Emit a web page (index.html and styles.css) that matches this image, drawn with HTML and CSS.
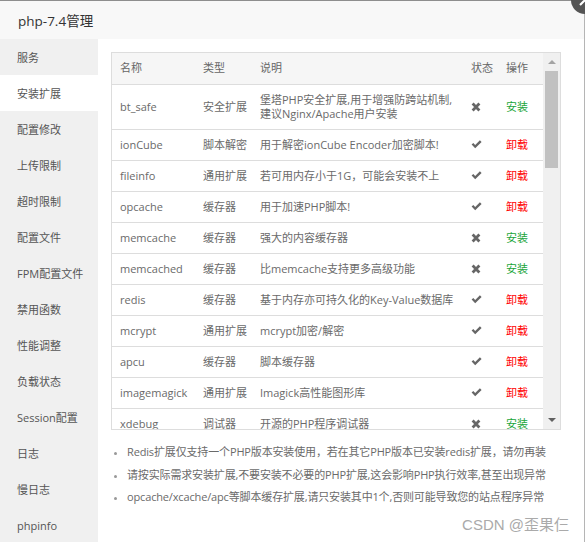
FILE: index.html
```html
<!DOCTYPE html>
<html>
    <head>
        <meta charset="UTF-8">
        <meta name="viewport" content="width=device-width, initial-scale=1.0">
        <link rel="stylesheet" href="styles.css">
        <title>php-7.4管理</title>
    </head>
    <body>

        <div class="layer">
            <div class="layer-title">php-7.4管理</div>

            <div class="layer-body">
                <ul class="side-menu">
                    <li>服务</li>
                    <li class="on">安装扩展</li>
                    <li>配置修改</li>
                    <li>上传限制</li>
                    <li>超时限制</li>
                    <li>配置文件</li>
                    <li>FPM配置文件</li>
                    <li>禁用函数</li>
                    <li>性能调整</li>
                    <li>负载状态</li>
                    <li>Session配置</li>
                    <li>日志</li>
                    <li>慢日志</li>
                    <li>phpinfo</li>
                </ul>

                <div class="main">
                    <div class="table-box">
                        <div class="table-scroll">
                            <table class="ext-table">
                                <colgroup>
                                    <col style="width:82px">
                                    <col style="width:57px">
                                    <col style="width:211px">
                                    <col style="width:35px">
                                    <col style="width:46px">
                                </colgroup>
                                <thead>
                                    <tr><th>名称</th><th>类型</th><th>说明</th><th>状态</th><th>操作</th></tr>
                                </thead>
                                <tbody id="extList"></tbody>
                            </table>
                        </div>
                        <div class="scrollbar">
                            <span class="arrow up"></span>
                            <div class="track"><div class="thumb"></div></div>
                            <span class="arrow down"></span>
                        </div>
                    </div>

                    <ul class="help">
                        <li>Redis扩展仅支持一个PHP版本安装使用，若在其它PHP版本已安装redis扩展，请勿再装</li>
                        <li>请按实际需求安装扩展,不要安装不必要的PHP扩展,这会影响PHP执行效率,甚至出现异常</li>
                        <li>opcache/xcache/apc等脚本缓存扩展,请只安装其中1个,否则可能导致您的站点程序异常</li>
                    </ul>
                </div>
            </div>

            <div class="watermark">CSDN @歪果仨</div>
        </div>

        <div class="layer-close">
            <svg width="30" height="30" viewBox="0 0 30 30">
                <circle cx="15" cy="15" r="14" fill="#555"/>
                <path d="M10 10 L20 20 M20 10 L10 20" stroke="#fff" stroke-width="2.2"/>
            </svg>
        </div>

        <script>
            // name, type, desc, installed
            const exts = [
                ["bt_safe", "安全扩展", "堡塔PHP安全扩展,用于增强防跨站机制,<br>建议Nginx/Apache用户安装", false],
                ["ionCube", "脚本解密", "用于解密ionCube Encoder加密脚本!", true],
                ["fileinfo", "通用扩展", "若可用内存小于1G，可能会安装不上", true],
                ["opcache", "缓存器", "用于加速PHP脚本!", true],
                ["memcache", "缓存器", "强大的内容缓存器", false],
                ["memcached", "缓存器", "比memcache支持更多高级功能", false],
                ["redis", "缓存器", "基于内存亦可持久化的Key-Value数据库", true],
                ["mcrypt", "通用扩展", "mcrypt加密/解密", true],
                ["apcu", "缓存器", "脚本缓存器", true],
                ["imagemagick", "通用扩展", "Imagick高性能图形库", true],
                ["xdebug", "调试器", "开源的PHP程序调试器", false]
            ];

            const okIcon = '<svg width="11" height="9" viewBox="0 0 11 9"><path d="M0.6 4.6 L2.3 3 L4.2 4.9 L8.9 0.3 L10.6 2 L4.2 8.3 Z" fill="#666"/></svg>';
            const noIcon = '<svg width="10" height="10" viewBox="0 0 10 10"><path d="M1.6 1.6 L8.4 8.4 M8.4 1.6 L1.6 8.4" stroke="#666" stroke-width="2.8"/></svg>';

            let html = "";
            exts.forEach((e) => {
                let op = e[3] ? '<a class="btn-del">卸载</a>' : '<a class="btn-add">安装</a>';
                let cls = e[2].indexOf("<br>") > -1 ? ' class="tall"' : '';
                html += "<tr" + cls + "><td>" + e[0] + "</td><td>" + e[1] + "</td><td>" + e[2] + "</td><td>" + (e[3] ? okIcon : noIcon) + "</td><td>" + op + "</td></tr>";
            });
            document.getElementById("extList").innerHTML = html;
        </script>
    </body>
</html>
```

FILE: styles.css
```css
* {
    box-sizing: border-box;
}

html,
body {
    margin: 0;
    padding: 0;
    overflow: hidden;
}

body {
    width: 585px;
    height: 542px;
    background: #fff;
    font-family: "Open Sans", "Noto Sans CJK SC", sans-serif;
    color: #6a6a6a;
}

.layer {
    position: relative;
    width: 585px;
    height: 542px;
    border-top: 1px solid #8e8e8e;
    border-right: 1px solid #b5b5b5;
    display: flex;
    flex-direction: column;
}

.layer-title {
    height: 38px;
    line-height: 40px;
    padding-left: 18px;
    font-size: 13.5px;
    color: #333;
    background: #f8f8f8;
}

/* round close button of the popup, mostly outside the window */
.layer-close {
    position: fixed;
    top: -15px;
    right: -15px;
    width: 30px;
    height: 30px;
    z-index: 20;
}

.layer-close svg {
    display: block;
}

.layer-body {
    flex: 1;
    display: flex;
}

.side-menu {
    width: 98px;
    margin: 0;
    padding: 0;
    list-style: none;
    background: #f0f0f0;
}

.side-menu li {
    height: 36px;
    line-height: 38px;
    padding-left: 17px;
    font-size: 11px;
    color: #555;
}

.side-menu li.on {
    background: #fff;
}

.main {
    flex: 1;
    padding: 13px 23px 0 13px;
}

.table-box {
    display: flex;
    height: 378px;
    border: 1px solid #ddd;
}

.table-scroll {
    flex: 1;
    overflow: hidden;
}

.ext-table {
    width: 431px;
    table-layout: fixed;
    border-collapse: collapse;
    font-size: 11px;
}

.ext-table th,
.ext-table td {
    height: 31px;
    padding: 0 0 0 8px;
    border-bottom: 1px solid #ddd;
    text-align: left;
    white-space: nowrap;
    font-weight: normal;
    vertical-align: middle;
    line-height: 14px;
}

.ext-table th {
    background: #f6f6f6;
    color: #666;
}

.ext-table th:nth-child(n+2),
.ext-table td:nth-child(n+2) {
    padding-left: 9px;
}

.ext-table tr.tall td {
    height: 45px;
}

.ext-table svg {
    display: block;
}

.btn-add {
    color: #20a53a;
}

.btn-del {
    color: #f00;
}

.scrollbar {
    width: 17px;
    display: flex;
    flex-direction: column;
    align-items: center;
    background: #f0f0f0;
}

.scrollbar .arrow {
    width: 0;
    height: 0;
    border-left: 4px solid transparent;
    border-right: 4px solid transparent;
    margin: 7px 0;
}

.scrollbar .arrow.up {
    border-bottom: 4px solid #a3a3a3;
}

.scrollbar .arrow.down {
    border-top: 4px solid #606060;
}

.scrollbar .track {
    flex: 1;
    width: 100%;
    padding: 0 2px;
}

.scrollbar .thumb {
    height: 97px;
    background: #c1c1c1;
}

.help {
    margin: 11px 0 0;
    padding: 0 0 0 16px;
    font-size: 11px;
    color: #6a6a6a;
}

.help li {
    line-height: 22.5px;
    white-space: nowrap;
    letter-spacing: -0.15px;
}

.help li::marker {
    color: #999;
    font-size: 9px;
}

.watermark {
    position: absolute;
    right: 15px;
    bottom: 8px;
    font-size: 15px;
    color: #aaa;
    font-family: "Liberation Sans", "Noto Sans CJK SC", sans-serif;
}
```
